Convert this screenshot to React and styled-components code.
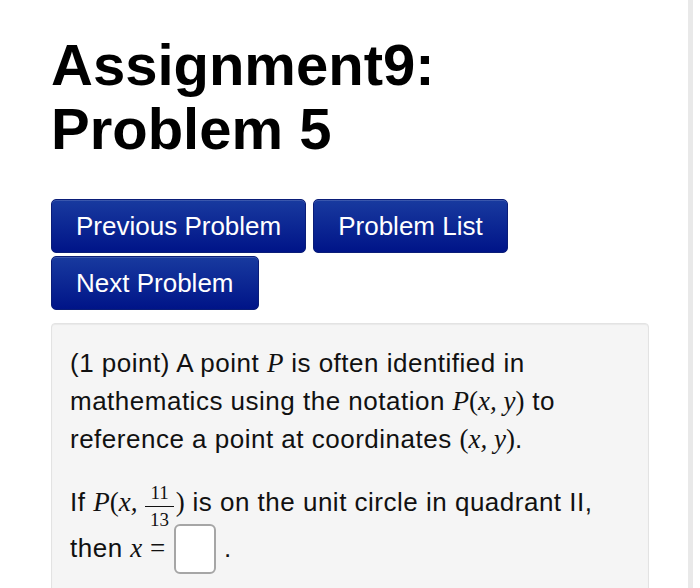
import React from "react";
import styled, { createGlobalStyle } from "styled-components";

const GlobalStyle = createGlobalStyle`
  html, body {
    margin: 0;
    padding: 0;
    background: #ffffff;
  }
  body {
    font-family: "Liberation Sans", Arial, Helvetica, sans-serif;
    color: #111;
    overflow: hidden;
  }
`;

const Page = styled.div`
  box-sizing: border-box;
  width: 693px;
  min-height: 588px;
  padding: 33px 0 0 51px;
  border-right: 5px solid #e9e9e9;
`;

const Title = styled.h1`
  margin: 0;
  font-size: 58px;
  line-height: 64px;
  font-weight: 700;
  color: #000;
`;

const Nav = styled.div`
  display: flex;
  flex-wrap: wrap;
  gap: 3px 7px;
  width: 470px;
  margin-top: 38px;
`;

const NavButton = styled.button`
  box-sizing: border-box;
  height: 54px;
  padding: 0 24px;
  font-family: "Liberation Sans", Arial, Helvetica, sans-serif;
  font-size: 26px;
  color: #fff;
  background: linear-gradient(to bottom, #183a9f, #001488);
  border: 1px solid #0a1d78;
  border-radius: 5px;
  box-shadow: inset 0 1px 0 rgba(255, 255, 255, 0.15);
  cursor: pointer;
`;

const Well = styled.div`
  box-sizing: border-box;
  width: 598px;
  margin-top: 13px;
  padding: 20px 18px 40px;
  background: #f5f5f5;
  border: 1px solid #e3e3e3;
  border-radius: 4px;
  box-shadow: inset 0 1px 1px rgba(0, 0, 0, 0.05);
  font-size: 26px;
  letter-spacing: 0.5px;
  line-height: 38px;
  color: #111;
`;

const Para = styled.p`
  margin: 0;
`;

const Second = styled(Para)`
  margin-top: 25px;
`;

const Last = styled(Para)`
  margin-top: -5px;
`;

const M = styled.span`
  font-family: "Liberation Serif", "Times New Roman", serif;
  font-size: 27px;
  letter-spacing: 0;
  font-style: ${(p) => (p.$up ? "normal" : "italic")};
`;

const Frac = styled.span`
  display: inline-block;
  vertical-align: -15px;
  margin: 0 2px 0 8px;
  text-align: center;
  font-family: "Liberation Serif", "Times New Roman", serif;
  font-size: 19px;
  line-height: 19px;
  letter-spacing: 0;
`;

const Num = styled.span`
  display: block;
  padding: 0 5px 4px;
  border-bottom: 1px solid #111;
`;

const Den = styled.span`
  display: block;
  padding-top: 3px;
`;

const AnswerBox = styled.span`
  display: inline-block;
  box-sizing: border-box;
  width: 42px;
  height: 50px;
  margin-left: 9px;
  vertical-align: -17px;
  background: #fff;
  border: 2px solid #a6a6a6;
  border-radius: 6px;
`;

export default function App() {
  return (
    <Page>
      <GlobalStyle />
      <Title>
        Assignment9:
        <br />
        Problem 5
      </Title>
      <Nav>
        <NavButton>Previous Problem</NavButton>
        <NavButton>Problem List</NavButton>
        <NavButton>Next Problem</NavButton>
      </Nav>
      <Well>
        <Para>
          (1 point) A point <M>P</M> is often identified in mathematics using
          the notation{" "}
          <M>
            P<M $up>(</M>x, y<M $up>)</M>
          </M>{" "}
          to reference a point at coordinates{" "}
          <M>
            <M $up>(</M>x, y<M $up>)</M>
          </M>
          .
        </Para>
        <Second>
          If{" "}
          <M>
            P<M $up>(</M>x,
          </M>
          <Frac>
            <Num>11</Num>
            <Den>13</Den>
          </Frac>
          <M $up>)</M> is on the unit circle in quadrant II,
        </Second>
        <Last>
          then <M>x</M> <M $up>=</M>
          <AnswerBox /> .
        </Last>
      </Well>
    </Page>
  );
}
